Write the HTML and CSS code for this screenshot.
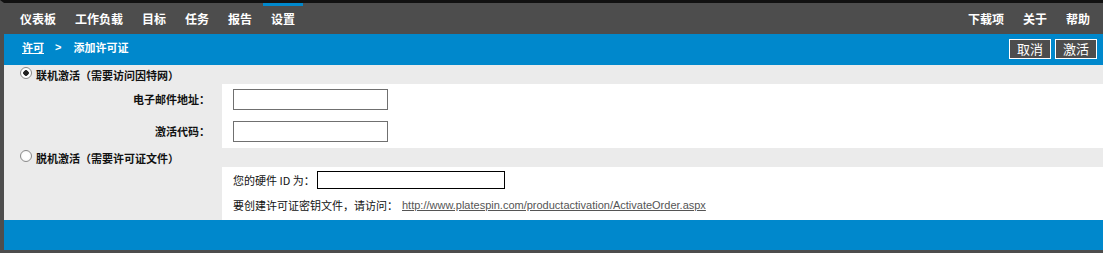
FILE: index.html
```
<!DOCTYPE html>
<html lang="zh-CN">
<head>
    <meta charset="UTF-8">
    <title>添加许可证</title>
    <link rel="stylesheet" href="styles.css">
</head>
<body>
    <div class="frame">
        <div class="topnav">
            <ul class="menu">
                <li>仪表板</li>
                <li>工作负载</li>
                <li>目标</li>
                <li>任务</li>
                <li>报告</li>
                <li class="active">设置</li>
            </ul>
            <ul class="menu">
                <li>下载项</li>
                <li>关于</li>
                <li>帮助</li>
            </ul>
        </div>

        <div class="subbar">
            <div class="crumbs">
                <a href="#">许可</a>
                <span class="sep">&gt;</span>
                <span>添加许可证</span>
            </div>
            <div class="actions">
                <button type="button" class="btn">取消</button>
                <button type="button" class="btn">激活</button>
            </div>
        </div>

        <div class="content">
            <label class="option">
                <input type="radio" name="mode" class="radio" checked>
                <span>联机激活（需要访问因特网）</span>
            </label>
            <div class="section">
                <div class="labels">
                    <div class="row">电子邮件地址：</div>
                    <div class="row">激活代码：</div>
                </div>
                <div class="fields">
                    <div class="row"><input type="text" class="field"></div>
                    <div class="row"><input type="text" class="field"></div>
                </div>
            </div>

            <label class="option">
                <input type="radio" name="mode" class="radio">
                <span>脱机激活（需要许可证文件）</span>
            </label>
            <div class="section">
                <div class="labels"></div>
                <div class="fields offline">
                    <div class="hw-line">
                        <span>您的硬件 ID 为：</span>
                        <input type="text" class="hw-field">
                    </div>
                    <div class="link-line">
                        <span>要创建许可证密钥文件，请访问：</span>
                        <a href="#" class="ext-link">http://www.platespin.com/productactivation/ActivateOrder.aspx</a>
                    </div>
                </div>
            </div>
        </div>

        <div class="footer"></div>
    </div>
</body>
</html>
```

FILE: styles.css
```
body {
    margin: 0;
    font-family: "Noto Sans CJK TC", "Liberation Sans", sans-serif;
    text-spacing-trim: space-all;
    background-color: #4d4d4d;
}
.frame {
    border-top: 3px solid #111;
    border-left: 4px solid #4d4d4d;
    border-bottom: 3px solid #4d4d4d;
}
.topnav {
    display: flex;
    justify-content: space-between;
    height: 31px;
    padding: 0 5px 0 8px;
    background-color: #4d4d4d;
}
.menu {
    display: flex;
    gap: 3px;
    margin: 0;
    padding: 0;
    list-style: none;
}
.menu li {
    padding: 0 8px;
    border-top: 3px solid transparent;
    color: #fff;
    font-size: 12px;
    font-weight: bold;
    line-height: 26px;
}
.menu li.active {
    border-top-color: #0088cc;
}
.subbar {
    display: flex;
    justify-content: space-between;
    align-items: center;
    height: 31px;
    padding: 0 6px 0 18px;
    background-color: #0088cc;
}
.crumbs {
    display: flex;
    align-items: center;
    color: #fff;
    font-size: 11px;
    font-weight: bold;
    margin-top: -5px;
}
.crumbs a {
    color: #fff;
}
.crumbs .sep {
    margin: 0 12px 0 11px;
    font-family: "Liberation Sans", sans-serif;
}
.actions {
    display: flex;
    gap: 4px;
    margin-top: -2px;
}
.btn {
    height: 20px;
    padding: 0 7px;
    border: 1px solid #fff;
    background-color: #4d4d4d;
    color: #fff;
    font-family: "Noto Sans CJK SC", sans-serif;
    font-size: 13px;
    line-height: 17px;
}
.content {
    background-color: #ebebeb;
}
.option {
    display: flex;
    align-items: center;
    height: 19px;
    padding-left: 16px;
    font-size: 11px;
    font-weight: bold;
    color: #111;
}
.radio {
    appearance: none;
    width: 12px;
    height: 12px;
    margin: -3px 4px 0 0;
    border: 1px solid #8a8a8a;
    border-radius: 50%;
    background: radial-gradient(circle, #fff 40%, #f0f0f0 100%);
    box-sizing: border-box;
}
.radio:checked {
    background: radial-gradient(circle, #222 0 2.5px, #fff 3px);
}
.section {
    display: flex;
}
.labels {
    width: 218px;
    padding: 5px 12px 6px 0;
    box-sizing: border-box;
    text-align: right;
    font-size: 11px;
    font-weight: bold;
    color: #111;
}
.labels .row {
    height: 21px;
    line-height: 21px;
    margin-bottom: 11px;
}
.fields {
    flex: 1;
    padding: 5px 0 6px 11px;
    background-color: #fff;
}
.fields .row {
    height: 21px;
    margin-bottom: 11px;
}
.labels .row:last-child,
.fields .row:last-child {
    margin-bottom: 0;
}
.field {
    display: block;
    width: 155px;
    height: 21px;
    margin: 0;
    border: 1px solid #707070;
    box-sizing: border-box;
}
.offline {
    padding: 4px 0 7px 11px;
    font-size: 11px;
    color: #111;
}
.hw-line {
    display: flex;
    align-items: center;
    gap: 2px;
    height: 18px;
}
.hw-field {
    width: 188px;
    height: 18px;
    margin: 0;
    border: 1px solid #000;
    box-sizing: border-box;
}
.link-line {
    display: flex;
    align-items: center;
    height: 16px;
    margin-top: 8px;
}
.ext-link {
    margin-left: 4px;
    color: #555;
    font-family: "Liberation Sans", sans-serif;
    font-size: 11px;
}
.footer {
    height: 30px;
    background-color: #0088cc;
}
```
